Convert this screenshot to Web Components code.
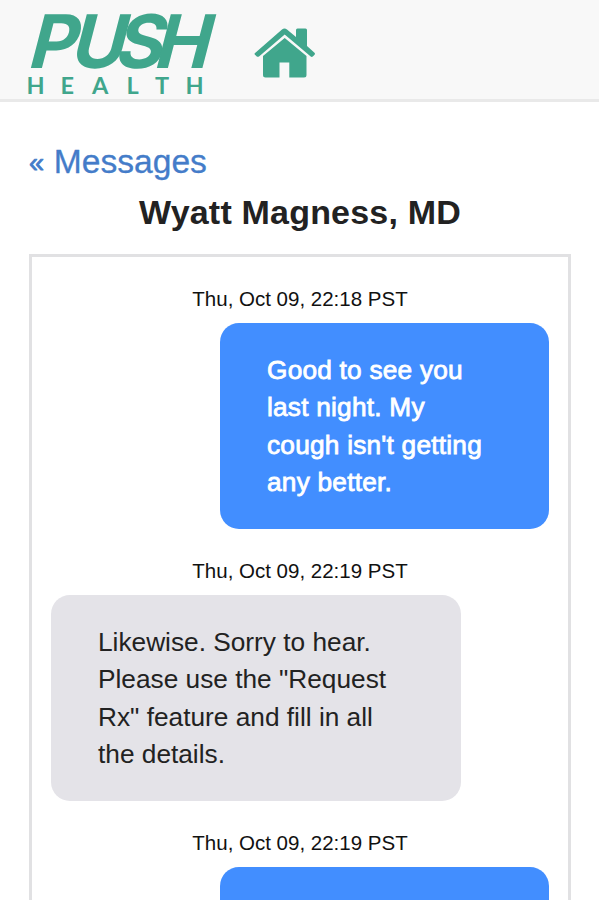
<!DOCTYPE html>
<html lang="en">
<head>
<meta charset="utf-8">
<title>Push Health</title>
<style>
  html {
    height: 100%;
    overflow: hidden;
  }
  body {
    display: flex;
    flex-direction: column;
    margin: 0;
    height: 900px;
    overflow: hidden;
    background: #fff;
    color: #222;
    font-family: "Liberation Sans", Arial, sans-serif;
  }
</style>
</head>
<body>
<push-header></push-header>
<message-thread name="Wyatt Magness, MD">
  <chat-message date="Thu, Oct 09, 22:18 PST" sent>Good to see you<br>last night. My<br>cough isn't getting<br>any better.</chat-message>
  <chat-message date="Thu, Oct 09, 22:19 PST">Likewise. Sorry to hear.<br>Please use the "Request<br>Rx" feature and fill in all<br>the details.</chat-message>
  <chat-message date="Thu, Oct 09, 22:19 PST" sent></chat-message>
</message-thread>

<script>
// top bar, with the logo and the home icon
class PushHeader extends HTMLElement {
  constructor() {
    super();
    const shadow = this.attachShadow({ mode: 'open' });

    shadow.innerHTML = `
    <style>
      :host {
        display: flex;
        flex: none;
        box-sizing: border-box;
        height: 102px;
        padding-left: 24px;
        background: #f8f8f8;
        border-bottom: 3px solid #e9e9e9;
      }
      svg {
        display: block;
        overflow: visible;
        fill: #40a68c;
      }
      .home {
        margin: 28px 0 0 30px;
      }
    </style>
    <svg width="200" height="99" viewBox="24 0 200 99">
      <text transform="translate(0 68) skewX(-14.5)" y="0" x="26 68 112.500 152" font-family="Inter" font-weight="700" font-size="74">PUSH</text>
      <text y="94" x="26.500 60.500 92 126.500 155 185.500" font-family="Lato" font-weight="700" font-size="23.5">HEALTH</text>
    </svg>
    <svg class="home" width="62" height="50" viewBox="254 28 62 50">
      <path d="M254.500 53.500L282 29.500Q284.500 27.400 287 29.500L296 37V30Q296 28.500 297.500 28.500H305.500Q307 28.500 307 30V46L314.500 52.700Q315.500 53.700 314.600 54.700L312.800 56.500Q311.800 57.400 310.700 56.500L284.700 34.500L259 56.400Q257.800 57.300 256.800 56.400L254.700 54.600Z"/>
      <path d="M263 56L284.700 38L306.500 56V75Q306.500 77.500 304 77.500H289.300V62.500H279.500V77.500H265.500Q263 77.500 263 75Z"/>
    </svg>
    `;
  }
}

// back link, name of the doctor and the box with the messages
class MessageThread extends HTMLElement {
  constructor() {
    super();
    const shadow = this.attachShadow({ mode: 'open' });

    shadow.innerHTML = `
    <style>
      :host {
        display: flex;
        flex: 1;
        flex-direction: column;
        min-height: 0;
        padding: 35px 28px 0 29px;
      }
      a {
        height: 50px;
        color: #447cc9;
        font-size: 33.6px;
        line-height: 50px;
        text-decoration: none;
        -webkit-text-stroke: 0.3px #447cc9;
      }
      a span {
        font-size: 27px;
        line-height: 1;
        margin-right: 0.5px;
        vertical-align: 1px;
        -webkit-text-stroke-width: 0.8px;
      }
      h1 {
        margin: 0;
        font-size: 34px;
        line-height: 50px;
        letter-spacing: 0.2px;
        text-align: center;
      }
      .messages {
        flex: 1;
        min-height: 0;
        overflow: hidden;
        margin-top: 17px;
        padding: 27px 19px 0;
        border: 3px solid #e1e1e3;
        border-bottom: 0;
      }
    </style>
    <a href="#"><span>«</span> Messages</a>
    <h1>${this.getAttribute('name')}</h1>
    <div class="messages"><slot></slot></div>
    `;
  }
}

// date and bubble, blue and on the right with the sent attribute
class ChatMessage extends HTMLElement {
  constructor() {
    super();
    const shadow = this.attachShadow({ mode: 'open' });

    shadow.innerHTML = `
    <style>
      :host {
        display: flex;
        flex-direction: column;
        align-items: flex-start;
        margin-bottom: 27px;
      }
      time {
        align-self: center;
        color: #111;
        font-size: 20.5px;
        line-height: 30px;
        margin-bottom: 9px;
      }
      .bubble {
        box-sizing: border-box;
        width: 410px;
        height: 206px;
        padding: 28.5px 47px 27px;
        border-radius: 19px;
        background: #e4e3e8;
        font-size: 26.25px;
        line-height: 37.5px;
        white-space: nowrap;
      }
      :host([sent]) .bubble {
        align-self: flex-end;
        width: 329px;
        background: #428eff;
        color: #fff;
        letter-spacing: 0.22px;
        -webkit-text-stroke: 0.8px #fff;
      }
    </style>
    <time>${this.getAttribute('date')}</time>
    <div class="bubble"><slot></slot></div>
    `;
  }
}

customElements.define('push-header', PushHeader);
customElements.define('message-thread', MessageThread);
customElements.define('chat-message', ChatMessage);
</script>
</body>
</html>
